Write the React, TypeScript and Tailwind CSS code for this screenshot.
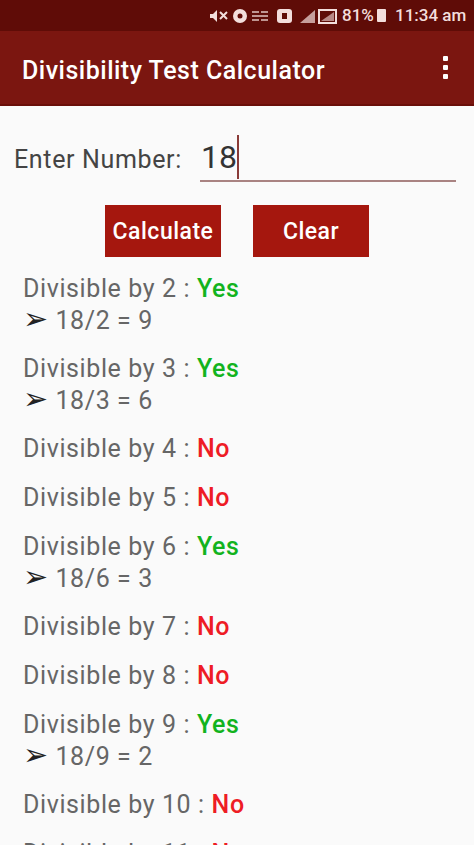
import React from "react";

const results = [
  { n: 2, q: 9 },
  { n: 3, q: 6 },
  { n: 4 },
  { n: 5 },
  { n: 6, q: 3 },
  { n: 7 },
  { n: 8 },
  { n: 9, q: 2 },
  { n: 10 },
  { n: 11 },
];

function StatusBar() {
  return (
    <div className="h-[31px] bg-[#5f0c07] flex items-center pl-[210px] text-[#f3dedc] text-[17px] font-medium">
      <svg width="128" height="18" viewBox="0 0 128 18" fill="currentColor">
        {/* muted speaker */}
        <path d="M0 7h3l4-4v12l-4-4H0z" />
        <path d="M10 5l7 7m0-7l-7 7" stroke="currentColor" strokeWidth="2" />
        {/* alarm */}
        <circle cx="30" cy="9" r="7" />
        <circle cx="30" cy="9" r="2.500" fill="#5f0c07" />
        {/* data */}
        <path d="M42 4h7v2h-7zM51 4h7v2h-7zM42 8h16v2h-16zM42 12h7v2h-7zM51 12h7v2h-7z" opacity="0.65" />
        {/* sim */}
        <rect x="67" y="2" width="15" height="14" rx="3" />
        <rect x="72" y="6" width="5" height="6" fill="#5f0c07" />
        {/* signal */}
        <path d="M90 16 L105 3 V16 Z" opacity="0.7" />
        {/* wifi box */}
        <rect x="109" y="3" width="17" height="13" fill="none" stroke="currentColor" strokeWidth="2" />
        <path d="M111 14 L124 5 V14 Z" opacity="0.6" />
      </svg>
      <span className="ml-[4px] w-[35px]">81%</span>
      <span className="w-[9px] h-[13px] bg-[#f3dedc] rounded-[1px]" />
      <span className="ml-[9px]">11:34 am</span>
    </div>
  );
}

function Row({ n, q }: { n: number; q?: number }) {
  return (
    <div className="mb-[18px] leading-[31px]">
      <div className="h-[31px]">
        Divisible by {n} :{" "}
        {q ? (
          <span className="font-medium text-[#12b31e]">Yes</span>
        ) : (
          <span className="font-medium text-[#ee1c25]">No</span>
        )}
      </div>
      {q ? (
        <div className="h-[31px]">
          <span className="text-[#222222] text-[30px] leading-none">➢</span> 18/{n} = {q}
        </div>
      ) : null}
    </div>
  );
}

export default function App() {
  return (
    <div className="w-[474px] h-[845px] overflow-hidden bg-[#fafafa] font-['Roboto',sans-serif]">
      <StatusBar />
      <div className="h-[75px] bg-[#7b1610] border-b-[2px] border-[#6a0f09] flex items-center justify-between pl-[22px] pr-[26px]">
        <h1 className="text-white text-[25px] font-medium tracking-[0.5px] pt-[7px]">Divisibility Test Calculator</h1>
        <div className="flex flex-col gap-[4px]">
          <span className="w-[5px] h-[5px] bg-white rounded-[1px]" />
          <span className="w-[5px] h-[5px] bg-white rounded-[1px]" />
          <span className="w-[5px] h-[5px] bg-white rounded-[1px]" />
        </div>
      </div>
      <div className="flex items-end pl-[14px] pt-[30px]">
        <span className="text-[25px] tracking-[0.65px] h-[46px] leading-[48px] text-[#444444] w-[186px]">Enter Number:</span>
        <div className="w-[256px] h-[46px] border-b-[2px] border-[#a98382] flex items-center text-[32px] leading-[40px] pb-[2px] text-[#333333] pl-[1px]">
          18<span className="w-[2px] h-[44px] bg-[#8a3b38]" />
        </div>
      </div>
      <div className="flex gap-[32px] pl-[105px] mt-[23px]">
        <button className="w-[116px] h-[52px] pt-[3px] bg-[#a5170e] text-white text-[23px] font-medium tracking-[0.5px]">Calculate</button>
        <button className="w-[116px] h-[52px] pt-[3px] bg-[#a5170e] text-white text-[23px] font-medium tracking-[0.5px]">Clear</button>
      </div>
      <div className="pl-[23px] pt-[16px] text-[25px] tracking-[0.6px] text-[#666666]">
        {results.map((r) => (
          <Row key={r.n} n={r.n} q={r.q} />
        ))}
      </div>
    </div>
  );
}
